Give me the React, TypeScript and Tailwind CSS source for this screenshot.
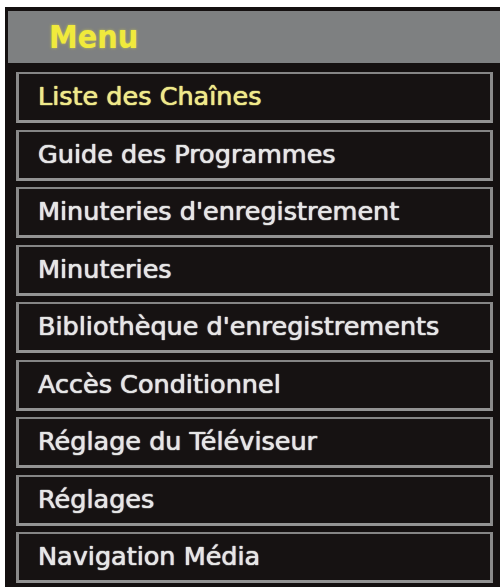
import React from "react";

const items = [
  "Liste des Chaînes",
  "Guide des Programmes",
  "Minuteries d'enregistrement",
  "Minuteries",
  "Bibliothèque d'enregistrements",
  "Accès Conditionnel",
  "Réglage du Téléviseur",
  "Réglages",
  "Navigation Média",
];

export default function App() {
  return (
    <div className="w-[500px] h-[587px] bg-white pt-[7px] pl-[5px] overflow-hidden">
      <div className="w-[495px] h-[580px] bg-[#141010] pt-[4px] pl-[3px] flex flex-col font-['DejaVu_Sans',sans-serif]">
        <div className="h-[52px] bg-[#7e8081] flex items-center pl-[41px]">
          <span className="text-[32px] font-bold text-[#f0ea3c] leading-none font-['DejaVu_Sans_Condensed',sans-serif] [text-shadow:0_0_3px_rgba(240,234,60,0.6)]">
            Menu
          </span>
        </div>
        <div className="flex flex-col gap-[6.5px] pt-[9px] pl-[8px] pr-[1px]">
          {items.map((t, i) => (
            <div
              key={t}
              className="h-[51px] w-[477px] bg-[#161212] border-t-2 border-l-[3px] border-b-[3px] border-r-[3px] border-t-[#858585] border-l-[#8a8a8a] border-b-[#939393] border-r-[#8a8a8a] flex items-center pl-[19px]"
            >
              <span
                className={
                  "text-[25.5px] leading-none [text-shadow:0_0_1px_currentColor,0_0_1px_currentColor] " +
                  (i === 0 ? "text-[#efe98a]" : "text-[#e6e6e6]")
                }
              >
                {t}
              </span>
            </div>
          ))}
        </div>
      </div>
    </div>
  );
}
